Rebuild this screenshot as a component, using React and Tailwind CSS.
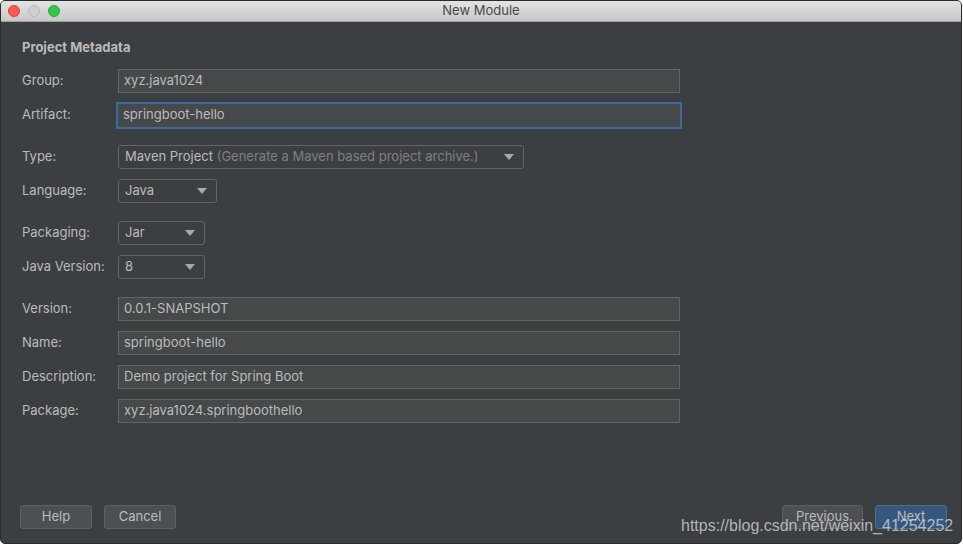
import React from "react";

const font = { fontFamily: "Inter, 'Noto Sans', 'Liberation Sans', sans-serif" };

function Field({ value, focused }) {
  if (focused) {
    return (
      <div className="w-[566px] h-[27px] -ml-[2px] -my-[1px] border-2 border-[#3d6a9c] bg-[#45494a] flex items-center pl-[5px] text-[13px] text-[#bbbbbb]">
        {value}
      </div>
    );
  }
  return (
    <div className="w-[562px] h-[24px] border border-[#646464] bg-[#45494a] flex items-center pl-[5px] text-[13px] text-[#bbbbbb]">
      {value}
    </div>
  );
}

function Caret() {
  return (
    <svg width="10" height="6" viewBox="0 0 10 6" className="shrink-0">
      <path d="M0 0 L10 0 L5 6 Z" fill="#a9a9a9" />
    </svg>
  );
}

function Select({ width, children }) {
  return (
    <div
      className={`${width} h-[24px] border border-[#646464] rounded-[3px] bg-[#3c3f41] flex items-center justify-between pl-[6px] pr-[9px] text-[13px] text-[#bbbbbb]`}
    >
      <span className="whitespace-nowrap">{children}</span>
      <Caret />
    </div>
  );
}

function Row({ label, children, className = "" }) {
  return (
    <div className={`flex items-center h-[24px] ${className}`}>
      <div className="w-[96px] text-[13px] text-[#bbbbbb]">{label}</div>
      {children}
    </div>
  );
}

function Button({ children, width, primary }) {
  return (
    <div
      className={`${width} h-[24px] rounded-[3px] border flex items-center justify-center text-[13px] ${
        primary
          ? "bg-[#365880] border-[#4c708c] text-[#bbbbbb]"
          : "bg-[#4c5052] border-[#5e6060] text-[#bbbbbb]"
      }`}
    >
      {children}
    </div>
  );
}

export default function App() {
  return (
    <div className="w-[963px] h-[545px] bg-white" style={font}>
      <div className="relative w-[962px] h-[544px] rounded-[5px] overflow-hidden bg-[#3c3f41] border border-[#2b2b2b] flex flex-col">
        {/* title bar */}
        <div className="relative h-[21px] shrink-0 bg-gradient-to-b from-[#e3e3e3] to-[#c8c8c8] border-b border-[#9f9f9f] flex items-center justify-center">
          <div className="absolute left-[7px] top-[4px] flex gap-[8px]">
            <span className="w-[12px] h-[12px] rounded-full bg-[#fc5753] border border-[#df3e3a]" />
            <span className="w-[12px] h-[12px] rounded-full bg-[#d0d0d0] border border-[#b9b9b9]" />
            <span className="w-[12px] h-[12px] rounded-full bg-[#33c748] border border-[#27a93a]" />
          </div>
          <span className="text-[13px] text-[#4a4a4a]">New Module</span>
        </div>

        {/* body */}
        <div className="flex-1 flex flex-col pl-[21px] pt-[16px]">
          <div className="text-[13px] font-bold text-[#bbbbbb] h-[18px] leading-[18px]">Project Metadata</div>
          <div className="flex flex-col gap-[10px] mt-[13px]">
            <Row label="Group:">
              <Field value="xyz.java1024" />
            </Row>
            <Row label="Artifact:">
              <Field value="springboot-hello" focused />
            </Row>
            <Row label="Type:" className="mt-[8px]">
              <Select width="w-[406px]">
                Maven Project <span className="text-[#808080]">(Generate a Maven based project archive.)</span>
              </Select>
            </Row>
            <Row label="Language:">
              <Select width="w-[99px]">Java</Select>
            </Row>
            <Row label="Packaging:" className="mt-[8px]">
              <Select width="w-[87px]">Jar</Select>
            </Row>
            <Row label="Java Version:">
              <Select width="w-[87px]">8</Select>
            </Row>
            <Row label="Version:" className="mt-[8px]">
              <Field value="0.0.1-SNAPSHOT" />
            </Row>
            <Row label="Name:">
              <Field value="springboot-hello" />
            </Row>
            <Row label="Description:">
              <Field value="Demo project for Spring Boot" />
            </Row>
            <Row label="Package:">
              <Field value="xyz.java1024.springboothello" />
            </Row>
          </div>
        </div>

        {/* footer */}
        <div className="h-[39px] shrink-0 flex items-start justify-between pl-[19px] pr-[14px] pt-[2px] mb-[1px]">
          <div className="flex gap-[12px]">
            <Button width="w-[72px]">Help</Button>
            <Button width="w-[72px]">Cancel</Button>
          </div>
          <div className="flex gap-[12px]">
            <Button width="w-[81px]">Previous</Button>
            <Button width="w-[72px]" primary>Next</Button>
          </div>
        </div>

        {/* watermark */}
        <div
          className="absolute left-[680px] top-[513px] text-[16px] text-[#d4d4d4]/80 whitespace-nowrap"
          style={{ fontFamily: "'Liberation Sans', Arial, sans-serif" }}
        >
          https://blog.csdn.net/weixin_41254252
        </div>
      </div>
    </div>
  );
}
